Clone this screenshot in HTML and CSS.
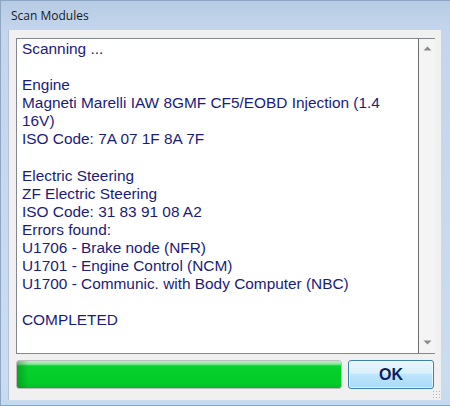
FILE: index.html
```html
<!DOCTYPE html>
<html>
<head>
<meta charset="utf-8">
<link rel="stylesheet" href="styles.css">
</head>
<body>
<div class="window">
  <div class="titlebar"><span class="title">Scan Modules</span></div>
  <div class="client">
    <div class="memo-row">
      <div class="memo">
        <div class="line">Scanning ...</div>
        <div class="line">&nbsp;</div>
        <div class="line">Engine</div>
        <div class="line">Magneti Marelli IAW 8GMF CF5/EOBD Injection (1.4 16V)</div>
        <div class="line">ISO Code: 7A 07 1F 8A 7F</div>
        <div class="line">&nbsp;</div>
        <div class="line">Electric Steering</div>
        <div class="line">ZF Electric Steering</div>
        <div class="line">ISO Code: 31 83 91 08 A2</div>
        <div class="line">Errors found:</div>
        <div class="line">U1706 - Brake node (NFR)</div>
        <div class="line">U1701 - Engine Control (NCM)</div>
        <div class="line">U1700 - Communic. with Body Computer (NBC)</div>
        <div class="line">&nbsp;</div>
        <div class="line">COMPLETED</div>
      </div>
      <div class="scrollbar">
        <svg class="arrow" width="9" height="6" viewBox="0 0 9 6"><path d="M0.5 5.5 L4.5 1.5 L8.5 5.5 Z" fill="#8a8a8a"/></svg>
        <svg class="arrow" width="9" height="6" viewBox="0 0 9 6"><path d="M0.5 0.5 L4.5 4.5 L8.5 0.5 Z" fill="#8a8a8a"/></svg>
      </div>
    </div>
    <div class="bottom-row">
      <div class="progress"><div class="fill"></div></div>
      <button class="ok">OK</button>
    </div>
  </div>
  <div class="grip"></div>
</div>
</body>
</html>
```
FILE: styles.css
```css
html, body {
  margin: 0;
  padding: 0;
  background: #ffffff;
}
.window {
  position: relative;
  width: 450px;
  height: 406px;
  box-sizing: border-box;
  background: linear-gradient(180deg, #b7cbe4 0px, #c3d6ed 30px, #cbdcf0 380px, #c6d9ee 404px, #3fc1ea 404px);
  border-left: 1px solid #8fa6c2;
  border-top: 1px solid #8ea5c3;
  display: flex;
  flex-direction: column;
}
.titlebar {
  height: 29px;
  display: flex;
  align-items: center;
  padding-left: 10px;
  padding-bottom: 1px;
  box-sizing: border-box;
}
.title {
  font-family: "Open Sans", "Noto Sans", "DejaVu Sans", sans-serif;
  font-size: 12px;
  color: #1a1a1a;
}
.client {
  margin: 0 9px 0 7px;
  height: 370px;
  background: #f0f0f0;
  border-left: 1px solid #b0c2d8;
  box-sizing: border-box;
  padding: 8px 6px 0 7px;
  display: flex;
  flex-direction: column;
}
.memo-row {
  display: flex;
  height: 316px;
  border: 1px solid #828790;
  border-right: none;
  box-sizing: border-box;
}
.memo {
  flex: 1;
  background: #ffffff;
  border-right: 1px solid #6d6d6d;
  padding: 1px 4px 0 5px;
  font-family: "Liberation Sans", Arial, sans-serif;
  font-size: 15.4px;
  line-height: 18.1px;
  color: #1b1b7c;
  overflow: hidden;
}
.line {
  white-space: normal;
}
.scrollbar {
  width: 16px;
  background: #f4f4f4;
  display: flex;
  flex-direction: column;
  justify-content: space-between;
  align-items: center;
  padding: 6px 0 7px 0;
  box-sizing: border-box;
}
.arrow {
  display: block;
}
.bottom-row {
  display: flex;
  gap: 6px;
  margin-top: 6px;
  height: 29px;
}
.progress {
  width: 326px;
  box-sizing: border-box;
  border: 1px solid #bcbcbc;
  border-radius: 3px;
  background: #e6e6e6;
  padding: 0;
  overflow: hidden;
}
.fill {
  height: 100%;
  background:
    linear-gradient(90deg, rgba(0,90,20,0.35) 0px, rgba(0,90,20,0) 12px),
    linear-gradient(180deg, #b4f0bf 0px, #8fe6a0 3px, #07d12d 5px, #02cd28 22px, #08b82a 27px);
}
.ok {
  width: 86px;
  height: 29px;
  box-sizing: border-box;
  border: 1px solid #3c7fb1;
  border-radius: 3px;
  background: linear-gradient(180deg, #eaf6fd 0%, #d9f0fc 45%, #bee6fd 50%, #a7d9f5 100%);
  box-shadow: inset 0 0 0 1px rgba(255,255,255,0.6);
  font-family: "Liberation Sans", Arial, sans-serif;
  font-weight: bold;
  font-size: 16px;
  color: #0d1e5e;
  padding: 0;
  margin-top: 0;
}
.grip {
  position: absolute;
  right: 10px;
  bottom: 8px;
  width: 8px;
  height: 8px;
  background:
    radial-gradient(circle, #b5b5b5 0.8px, transparent 1px) 0 0 / 3px 3px;
}
```
